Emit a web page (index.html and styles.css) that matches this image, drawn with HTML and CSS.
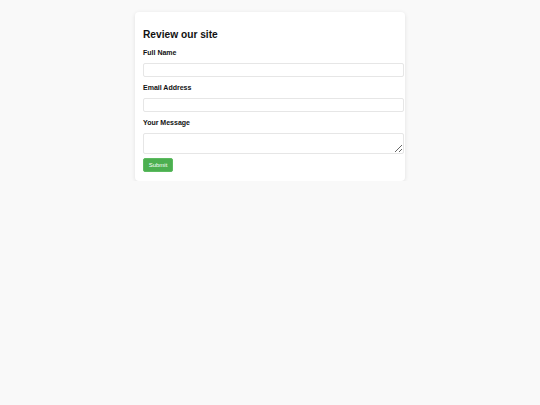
FILE: index.html
```html
<!DOCTYPE html>
<html lang="en">
<head>
<meta charset="utf-8">
<title>Review our site</title>
<link rel="stylesheet" href="styles.css">
</head>
<body>
<main class="card">
  <h2 class="title">Review our site</h2>
  <form class="form">
    <div class="group">
      <label class="label" for="name">Full Name</label>
      <input class="field" type="text" id="name">
    </div>
    <div class="group">
      <label class="label" for="email">Email Address</label>
      <input class="field" type="email" id="email">
    </div>
    <div class="group">
      <label class="label" for="msg">Your Message</label>
      <textarea class="field area" id="msg"></textarea>
    </div>
    <button class="submit" type="button">Submit</button>
  </form>
</main>
</body>
</html>
```
FILE: styles.css
```css
html, body {
  margin: 0;
  padding: 0;
  background: #f9f9f9;
  font-family: "Liberation Sans", Arial, sans-serif;
  color: #111;
}
body {
  padding-top: 12px;
}
.card {
  display: block;
  width: 270px;
  box-sizing: border-box;
  margin: 0 auto;
  background: #fff;
  border-radius: 4px;
  box-shadow: 0 1px 4px rgba(0, 0, 0, 0.1);
  padding: 17px 8px 8.5px;
}
.title {
  margin: 0 0 8px;
  font-size: 10.2px;
  line-height: 12px;
  font-weight: bold;
}
.form {
  margin: 0;
}
.group {
  margin-bottom: 7px;
}
.label {
  display: block;
  font-size: 7px;
  line-height: 8px;
  font-weight: bold;
  margin-bottom: 6px;
}
.field {
  display: block;
  width: 100%;
  height: 12px;
  padding: 0 2.5px;
  margin: 0;
  border: 1px solid #e6e6e6;
  border-radius: 2px;
  background: #fff;
  font: 7px "Liberation Sans", Arial, sans-serif;
  outline: none;
}
.area {
  height: 19px;
  resize: vertical;
}
.group:last-of-type {
  margin-bottom: 4px;
}
.submit {
  display: block;
  width: 30px;
  height: 14px;
  padding: 0;
  border: 1px solid #5cbb60;
  border-radius: 2px;
  background: #4caf50;
  color: #fff;
  font: 6px "Liberation Sans", Arial, sans-serif;
  cursor: pointer;
}
```
